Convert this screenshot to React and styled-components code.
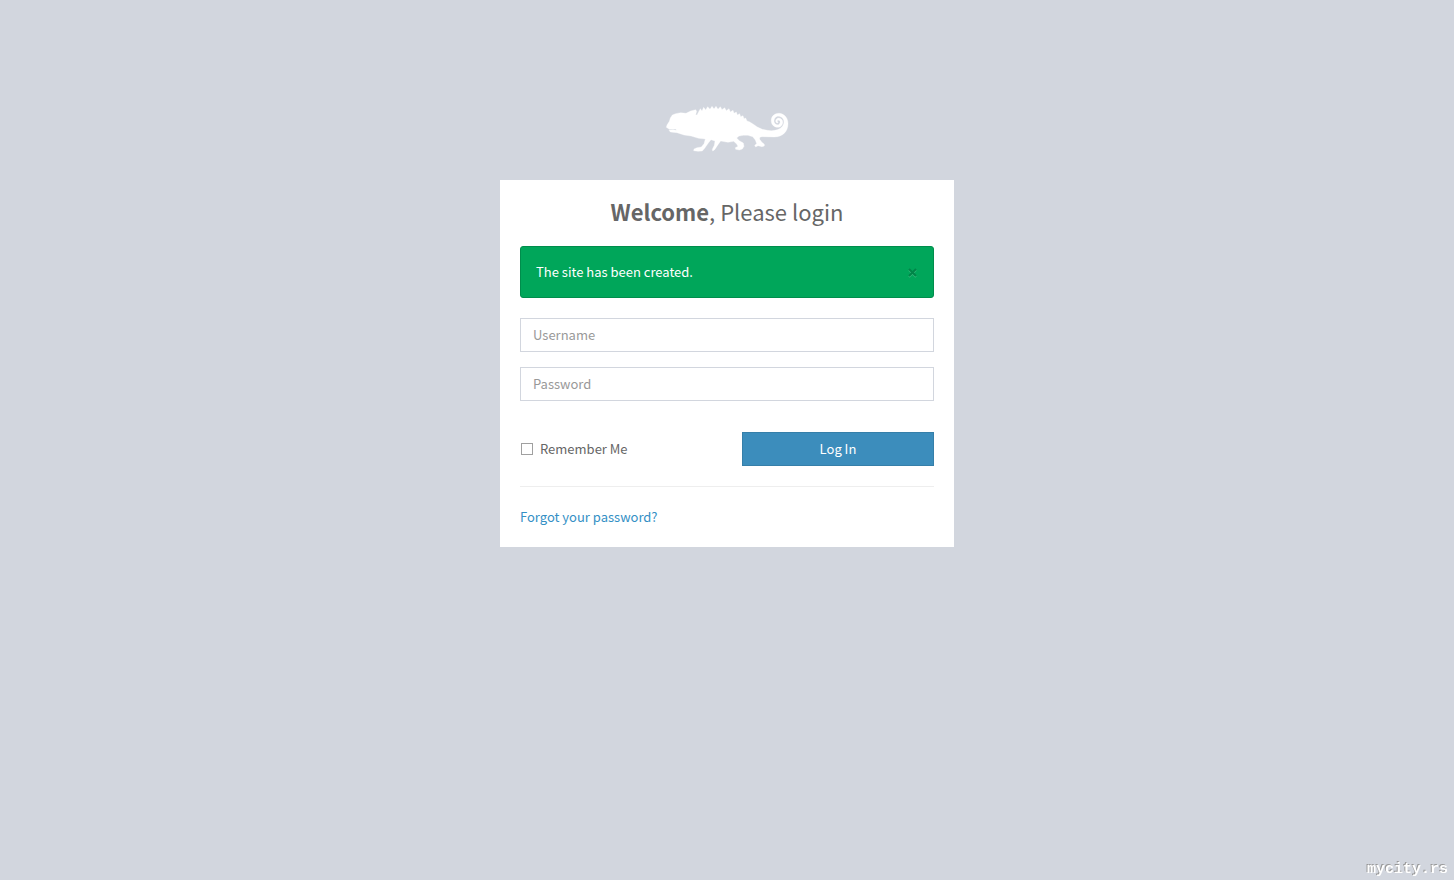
import React, { useState } from 'react';
import styled, { createGlobalStyle } from 'styled-components';

const GlobalStyle = createGlobalStyle`
  *, *::before, *::after { box-sizing: border-box; }
  body {
    margin: 0;
    background: #d2d6de;
    color: #666;
    font-family: "Noto Sans CJK SC", "Noto Sans", sans-serif;
    font-size: 13px;
    line-height: 20px;
  }
  input, button { font: inherit; }
`;

const Page = styled.main`
  display: flex;
  flex-direction: column;
  align-items: center;
  min-height: 100vh;
  padding: 100px 20px 40px;
`;

const Logo = styled.svg`
  display: block;
  width: 134px;
  height: 60px;
  margin-bottom: 20px;
  fill: #fff;
  stroke: #fff;
  stroke-width: 1;
`;

const LoginBox = styled.section`
  width: 100%;
  max-width: 454px;
  padding: 20px;
  background: #fff;
`;

const Title = styled.h1`
  margin: 0 0 24px;
  font-size: 22px;
  font-weight: 400;
  line-height: 22px;
  text-align: center;
`;

const Alert = styled.div`
  display: flex;
  align-items: center;
  justify-content: space-between;
  margin-bottom: 20px;
  padding: 15px;
  border: 1px solid #008d4c;
  border-radius: 3px;
  background: #00a65a;
  color: #fff;
`;

const CloseButton = styled.button`
  display: flex;
  padding: 0;
  border: 0;
  background: none;
  cursor: pointer;
`;

const Field = styled.input`
  display: block;
  width: 100%;
  height: 34px;
  margin-bottom: 15px;
  padding: 5px 12px 7px;
  border: 1px solid #d2d6de;
  border-radius: 0;
  background: #fff;
  color: #555;
  outline: none;
  &::placeholder { color: #999; opacity: 1; }
  &:focus { border-color: #3c8dbc; }
`;

const Actions = styled.div`
  display: flex;
  align-items: center;
  justify-content: space-between;
  padding: 16px 0 20px;
  border-bottom: 1px solid #eee;
`;

const Remember = styled.label`
  display: flex;
  align-items: center;
  gap: 7px;
  padding-left: 1px;
  cursor: pointer;
`;

const Checkbox = styled.input`
  appearance: none;
  width: 12px;
  height: 12px;
  margin: 0;
  border: 1px solid #a0a0a0;
  background: #fff;
  &:checked { background: #3c8dbc; }
`;

const SubmitButton = styled.button`
  width: 192px;
  height: 34px;
  padding: 0 12px;
  border: 1px solid #367fa9;
  background: #3c8dbc;
  color: #fff;
  cursor: pointer;
`;

const ForgotLink = styled.a`
  display: inline-block;
  margin-top: 20px;
  color: #3490c5;
  text-decoration: none;
`;

const SiteMark = styled.footer`
  position: fixed;
  right: 6px;
  bottom: 0;
  color: #fff;
  font-family: "Liberation Mono", monospace;
  font-size: 15px;
  font-weight: 700;
  text-shadow: -1px -1px 0 #999;
`;

function Chameleon() {
  return (
    <Logo viewBox="0 0 402 180" role="img" aria-label="Chameleon">
      <path d="M19 82 L21 75 L28 64 L31 54 L37 45 L47 41 L62 38 L78 40 L92 33 L107 29 L110 34 L107 44 L111 45 L116 35 L121 26 L126 33 L131 22 L137 30 L143 20 L150 28 L156 19 L162 27 L168 19 L174 28 L181 20 L186 29 L194 23 L199 32 L207 26 L211 36 L219 31 L222 40 L229 36 L232 45 L239 41 L242 50 L249 47 L252 56 L257 54 L261 63 L268 65 L279 72 L292 81 L307 88 L322 91 C341 94 359 90 367 79 C375 69 373 54 361 50 C350 45 342 54 342 64 C343 73 353 78 358 72 C363 67 360 59 354 61 C351 62 351 66 355 66 C353 71 347 69 347 63 C348 54 357 51 364 57 C371 63 369 75 361 80 C350 86 335 78 334 65 C332 51 342 40 357 40 C374 41 384 55 384 71 C384 94 369 110 343 111 L306 110 C300 110 298 113 299 118 L305 126 L313 133 L313 138 L306 140 L294 137 L287 141 L284 136 L290 131 L286 120 L278 110 L264 106 L250 106 L237 108 L230 114 L238 122 L250 129 L252 139 L247 147 L238 150 L227 148 L226 143 L234 139 L230 132 L221 124 L204 127 L182 123 L174 134 L164 149 L158 153 L157 148 L163 136 L165 123 L153 119 L145 129 L134 145 L127 153 L114 154 L101 152 L102 147 L111 143 L124 141 L132 131 L136 117 L116 115 L93 108 L72 105 L51 98 L31 96 L27 91 L39 89 L49 91 L48 87 L28 88 Z" />
    </Logo>
  );
}

export default function App() {
  const [alertOpen, setAlertOpen] = useState(true);

  return (
    <>
      <GlobalStyle />
      <Page>
        <Chameleon />
        <LoginBox>
          <Title><strong>Welcome</strong>, Please login</Title>
          {alertOpen && (
            <Alert role="status">
              The site has been created.
              <CloseButton type="button" aria-label="Close" onClick={() => setAlertOpen(false)}>
                <svg width="11" height="11" viewBox="0 0 11 11" fill="none" strokeWidth="2">
                  <path d="M2 3 L9 10 M9 3 L2 10" stroke="#33b87b" />
                  <path d="M2 2 L9 9 M9 2 L2 9" stroke="#008548" />
                </svg>
              </CloseButton>
            </Alert>
          )}
          <form onSubmit={(event) => event.preventDefault()}>
            <Field type="text" name="username" placeholder="Username" aria-label="Username" />
            <Field type="password" name="password" placeholder="Password" aria-label="Password" />
            <Actions>
              <Remember>
                <Checkbox type="checkbox" name="remember" />
                Remember Me
              </Remember>
              <SubmitButton type="submit">Log In</SubmitButton>
            </Actions>
          </form>
          <ForgotLink href="#forgot">Forgot your password?</ForgotLink>
        </LoginBox>
      </Page>
      <SiteMark>mycity.rs</SiteMark>
    </>
  );
}
